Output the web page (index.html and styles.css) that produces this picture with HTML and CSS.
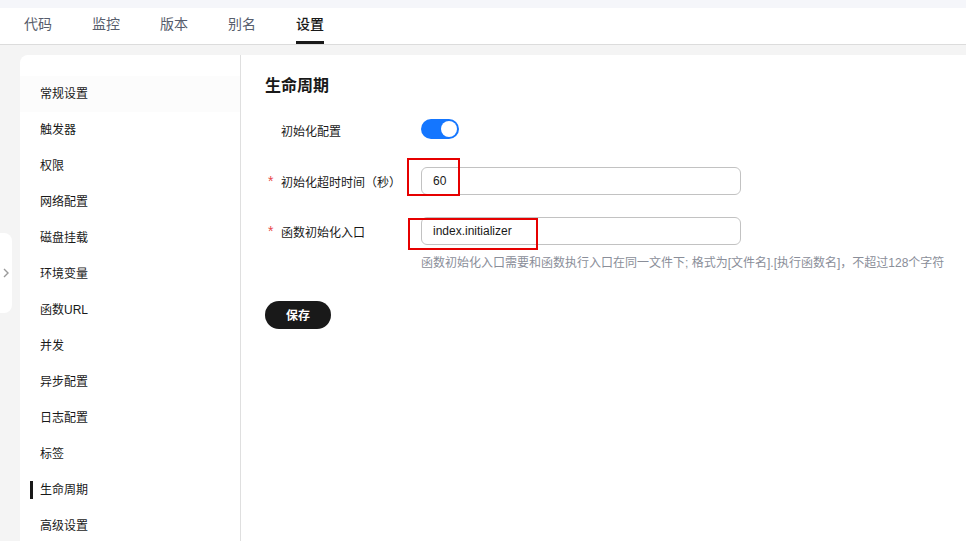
FILE: index.html
```html
<!DOCTYPE html>
<html lang="zh-CN">
<head>
<meta charset="utf-8">
<title>生命周期</title>
<link rel="stylesheet" href="styles.css">
</head>
<body>
<div class="topstrip"></div>
<nav class="tabs">
  <span class="tab">代码</span>
  <span class="tab">监控</span>
  <span class="tab">版本</span>
  <span class="tab">别名</span>
  <span class="tab active">设置</span>
</nav>
<div class="workspace">
  <div class="card">
    <aside class="sidebar">
      <div class="item hover">常规设置</div>
      <div class="item">触发器</div>
      <div class="item">权限</div>
      <div class="item">网络配置</div>
      <div class="item">磁盘挂载</div>
      <div class="item">环境变量</div>
      <div class="item">函数URL</div>
      <div class="item">并发</div>
      <div class="item">异步配置</div>
      <div class="item">日志配置</div>
      <div class="item">标签</div>
      <div class="item active">生命周期</div>
      <div class="item">高级设置</div>
    </aside>
    <main class="main">
      <h2 class="title">生命周期</h2>
      <div class="row row-toggle">
        <div class="label"><span class="star"></span>初始化配置</div>
        <div class="control">
          <span class="switch"><span class="knob"></span></span>
        </div>
      </div>
      <div class="row row-timeout">
        <div class="label"><span class="star">*</span>初始化超时时间（秒）</div>
        <div class="control">
          <div class="input">60</div>
          <span class="mark mark-timeout"></span>
        </div>
      </div>
      <div class="row row-entry">
        <div class="label"><span class="star">*</span>函数初始化入口</div>
        <div class="control">
          <div class="input">index.initializer</div>
          <span class="mark mark-entry"></span>
          <div class="help">函数初始化入口需要和函数执行入口在同一文件下; 格式为[文件名].[执行函数名]，不超过128个字符</div>
        </div>
      </div>
      <button class="save">保存</button>
    </main>
  </div>
</div>
<div class="collapse">
  <svg width="6" height="10" viewBox="0 0 6 10"><polyline points="1,1 5,5 1,9" fill="none" stroke="#9a9a9a" stroke-width="1.4"/></svg>
</div>
</body>
</html>
```
FILE: styles.css
```css
html, body {
  margin: 0;
  padding: 0;
  height: 541px;
  overflow: hidden;
}
body {
  font-family: "Liberation Sans", "Noto Sans CJK SC", sans-serif;
  color: #191919;
  background: #f4f4f4;
  position: relative;
}
.topstrip {
  height: 8px;
  background: #f5f6fa;
}
.tabs {
  display: flex;
  gap: 40px;
  padding-left: 24px;
  height: 36px;
  background: #fff;
  border-bottom: 1px solid #dcdcdc;
}
.tab {
  font-size: 14px;
  line-height: 20px;
  padding-top: 6px;
  height: 28px;
  color: #575d6c;
  border-bottom: 2px solid transparent;
}
.tab.active {
  color: #191919;
  font-weight: 500;
  border-bottom: 3px solid #191919;
  height: 27px;
}
.workspace {
  padding: 10px 0 0 20px;
  height: 486px;
}
.card {
  display: flex;
  height: 486px;
  background: #fff;
  border-top-left-radius: 8px;
  overflow: hidden;
}
.sidebar {
  width: 220px;
  flex: none;
  border-right: 1px solid #dfdfdf;
  padding-top: 21px;
}
.item {
  position: relative;
  height: 36px;
  line-height: 36px;
  padding-left: 20px;
  font-size: 12px;
  color: #191919;
}
.item.hover {
  background: #fcfcfc;
}
.item.active::before {
  content: "";
  position: absolute;
  left: 10px;
  top: 9px;
  width: 3px;
  height: 18px;
  background: #191919;
}
.main {
  flex: 1;
  padding: 20px 0 0 24px;
}
.title {
  margin: 0;
  font-size: 16px;
  line-height: 22px;
  font-weight: 700;
}
.row {
  display: flex;
  align-items: flex-start;
}
.label {
  width: 156px;
  flex: none;
  display: flex;
  align-items: center;
  font-size: 12px;
  color: #191919;
}
.star {
  width: 16px;
  flex: none;
  color: #e84a4a;
  font-size: 14px;
  padding-left: 3px;
  box-sizing: border-box;
}
.control {
  position: relative;
}
.row-toggle {
  margin-top: 22px;
}
.row-toggle .label {
  height: 20px;
  padding-top: 3px;
  box-sizing: border-box;
}
.row-timeout {
  margin-top: 28px;
}
.row-entry {
  margin-top: 22px;
}
.row-timeout .label,
.row-entry .label {
  height: 28px;
}
.switch {
  display: block;
  width: 38px;
  height: 20px;
  border-radius: 10px;
  background: #1476ff;
  position: relative;
}
.knob {
  position: absolute;
  right: 2px;
  top: 2px;
  width: 16px;
  height: 16px;
  border-radius: 50%;
  background: #fff;
}
.input {
  width: 320px;
  height: 28px;
  box-sizing: border-box;
  border: 1px solid #c2c2c2;
  border-radius: 6px;
  padding-left: 11px;
  font-size: 12px;
  line-height: 26px;
  color: #191919;
}
.mark {
  position: absolute;
  border: 2px solid #e60000;
  box-sizing: border-box;
}
.mark-timeout {
  left: -14px;
  top: -9px;
  width: 53px;
  height: 38px;
}
.mark-entry {
  left: -13px;
  top: 1px;
  width: 130px;
  height: 32px;
}
.help {
  margin-top: 9px;
  font-size: 12px;
  line-height: 18px;
  color: #8a8e99;
  white-space: nowrap;
}
.save {
  margin-top: 29px;
  width: 66px;
  height: 28px;
  border: none;
  border-radius: 14px;
  background: #191919;
  color: #fff;
  font-family: "Liberation Sans", "Noto Sans CJK SC", sans-serif;
  font-size: 12px;
  font-weight: 700;
  padding: 0 0 1px 0;
}
.collapse {
  position: absolute;
  left: 0;
  top: 233px;
  width: 12px;
  height: 80px;
  background: #fff;
  border-radius: 0 8px 8px 0;
  display: flex;
  align-items: center;
  justify-content: center;
}
```
